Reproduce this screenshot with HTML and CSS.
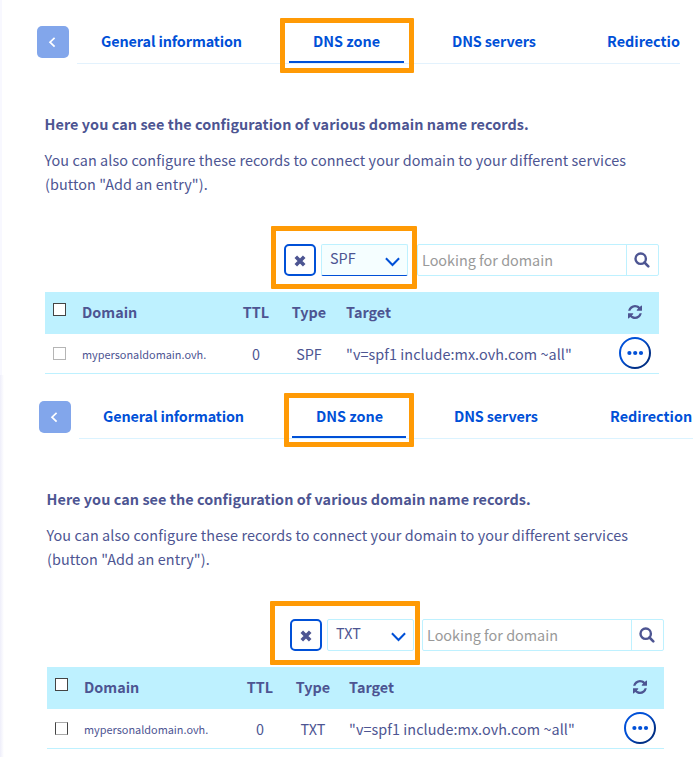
FILE: index.html
```html
<!DOCTYPE html>
<html lang="en">
<head>
<meta charset="utf-8">
<title>DNS zone</title>
<link rel="stylesheet" href="styles.css">
</head>
<body>
<svg width="0" height="0" class="sprite" aria-hidden="true">
  <symbol id="back" viewBox="0 0 32 32"><path d="M17.6 11.8 13 16.2l4.6 4.4" fill="none" stroke="#fff" stroke-width="1.7"/></symbol>
  <symbol id="cross" viewBox="0 0 12 12"><path d="M1.800 1.800 10.200 10.200M10.200 1.800 1.800 10.200" fill="none" stroke="#4d5592" stroke-width="3.600"/></symbol>
  <symbol id="chevron" viewBox="0 0 15 10"><path d="M.9 1.300 7.500 8l6.600-6.700" fill="none" stroke="#0050d7" stroke-width="2"/></symbol>
  <symbol id="search" viewBox="0 0 16 16"><circle cx="6.700" cy="6.700" r="5.200" fill="none" stroke="#4d5592" stroke-width="2.400"/><path d="m10.500 10.500 3.800 3.800" stroke="#4d5592" stroke-width="2.600" stroke-linecap="round"/></symbol>
  <symbol id="refresh" viewBox="0 0 1536 1536"><path fill="#4d5592" d="M1511 928q0 5-1 7-64 268-268 434.500T764 1536q-146 0-282.500-55T238 1324l-129 129q-19 19-45 19t-45-19-19-45V960q0-26 19-45t45-19h448q26 0 45 19t19 45-19 45l-137 137q71 66 161 102t187 36q134 0 250-65t186-179q11-17 53-117 8-23 30-23h192q13 0 22.500 9.500t9.500 22.500zm25-800v448q0 26-19 45t-45 19h-448q-26 0-45-19t-19-45 19-45l138-138Q969 256 768 256q-134 0-250 65T332 500q-11 17-53 117-8 23-30 23H50q-13 0-22.500-9.500T18 608v-7q65-268 270-434.500T768 0q146 0 284 55.500T1297 212l130-129q19-19 45-19t45 19 19 45z"/></symbol>
  <symbol id="menu" viewBox="0 0 32 32"><circle cx="16" cy="16" r="15" fill="#fff" stroke="url(#ring)" stroke-width="2"/><g fill="#0050d7"><circle cx="10.400" cy="16" r="2.100"/><circle cx="16.200" cy="16" r="2.100"/><circle cx="22" cy="16" r="2.100"/></g></symbol>
  <linearGradient id="ring" x1="0" y1="0" x2="1" y2="1"><stop offset=".4" stop-color="#0050d7"/><stop offset=".75" stop-color="#002f86"/></linearGradient>
</svg>

<section class="panel panel-spf">
  <nav class="topbar">
    <button class="back" aria-label="Back"><svg><use href="#back"/></svg></button>
    <div class="tabs">
      <a class="tab tab-general"><span>General information</span></a>
      <a class="tab tab-zone active"><span>DNS zone</span><i class="highlight"></i></a>
      <a class="tab tab-servers"><span>DNS servers</span></a>
      <a class="tab tab-redirect"><span>Redirectio</span></a>
    </div>
  </nav>
  <div class="content">
    <h2>Here you can see the configuration of various domain name records.</h2>
    <p>You can also configure these records to connect your domain to your different services<br><span class="hint">(button "Add an entry").</span></p>
    <div class="toolbar">
      <div class="filter">
        <button class="clear" aria-label="Clear filter"><svg><use href="#cross"/></svg></button>
        <div class="select focused"><span>SPF</span><svg><use href="#chevron"/></svg></div>
        <i class="highlight"></i>
      </div>
      <div class="search"><input type="text" placeholder="Looking for domain"><button aria-label="Search"><svg><use href="#search"/></svg></button></div>
    </div>
    <div class="records">
      <div class="row head">
        <i class="check"></i><b>Domain</b><b class="mid">TTL</b><b class="mid">Type</b><b class="target">Target</b><svg class="refresh"><use href="#refresh"/></svg>
      </div>
      <div class="row">
        <i class="check pale"></i><span class="domain">mypersonaldomain.ovh.</span><span class="mid">0</span><span class="mid">SPF</span><span class="target value">"v=spf1 include:mx.ovh.com ~all"</span><svg class="menu"><use href="#menu"/></svg>
      </div>
    </div>
  </div>
</section>

<section class="panel panel-txt">
  <nav class="topbar">
    <button class="back" aria-label="Back"><svg><use href="#back"/></svg></button>
    <div class="tabs">
      <a class="tab tab-general"><span>General information</span></a>
      <a class="tab tab-zone active"><span>DNS zone</span><i class="highlight"></i></a>
      <a class="tab tab-servers"><span>DNS servers</span></a>
      <a class="tab tab-redirect"><span>Redirection</span></a>
    </div>
  </nav>
  <div class="content">
    <h2>Here you can see the configuration of various domain name records.</h2>
    <p>You can also configure these records to connect your domain to your different services<br><span class="hint">(button "Add an entry").</span></p>
    <div class="toolbar">
      <div class="filter">
        <button class="clear" aria-label="Clear filter"><svg><use href="#cross"/></svg></button>
        <div class="select"><span>TXT</span><svg><use href="#chevron"/></svg></div>
        <i class="highlight"></i>
      </div>
      <div class="search"><input type="text" placeholder="Looking for domain"><button aria-label="Search"><svg><use href="#search"/></svg></button></div>
    </div>
    <div class="records">
      <div class="row head">
        <i class="check"></i><b>Domain</b><b class="mid">TTL</b><b class="mid">Type</b><b class="target">Target</b><svg class="refresh"><use href="#refresh"/></svg>
      </div>
      <div class="row">
        <i class="check half"></i><span class="domain">mypersonaldomain.ovh.</span><span class="mid">0</span><span class="mid">TXT</span><span class="target value">"v=spf1 include:mx.ovh.com ~all"</span><svg class="menu"><use href="#menu"/></svg>
      </div>
    </div>
  </div>
</section>
</body>
</html>
```

FILE: styles.css
```css
* { box-sizing: border-box; }
body {
  margin: 0;
  width: 698px;
  height: 757px;
  overflow: hidden;
  background: #fff;
  color: #4d5592;
  font: 14.4px/24px "Noto Sans CJK SC", "Noto Sans", sans-serif;
}
.sprite { position: absolute; }
svg { display: block; }
button { padding: 0; margin: 0; background: none; border: 0; }
.panel { height: 375px; padding-top: 26px; background: linear-gradient(90deg, #f8f8ff 2px, #fff 2px); }
.panel-spf { padding-left: 37px; }
.panel-txt { height: 382px; padding-left: 39px; background: linear-gradient(90deg, #eeeefa 0, #fff 4px); }

.topbar { display: flex; gap: 8px; height: 38px; }
.back { flex: none; width: 32px; height: 32px; border-radius: 5px; background: #82a6eb; }
.back svg { width: 32px; height: 32px; }
.tabs { display: flex; gap: 24px; width: 603px; height: 38px; border-bottom: 1px solid #e3f2fd; }
.panel-txt .tabs { width: 614px; border-color: #dbf3ff; }
.tab { flex: none; position: relative; height: 37px; padding: 3px 0 0 24px; color: #0050d7; font-weight: bold; white-space: nowrap; }
.tab-general { width: 188px; letter-spacing: -.12px; }
.tab-zone { width: 115px; }
.tab-servers { width: 131px; letter-spacing: -.12px; }
.panel-txt .tab-general { width: 189px; }
.panel-txt .tab-zone { width: 114px; }
.panel-txt .tab-servers { width: 132px; }
.active { border-bottom: 2px solid #0050d7; }
.highlight { position: absolute; border: 5px solid #ff9a05; border-radius: 1px; }
.tab .highlight { left: -9px; top: -8px; width: 134px; height: 55px; }
.panel-txt .tab .highlight { left: -8px; width: 130px; height: 54px; }

.content { width: 614px; margin: 48px 0 0 8px; }
.panel-txt .content { width: 617px; }
h2 { margin: 0 0 12px; font-size: inherit; line-height: 24px; letter-spacing: .07px; text-indent: -.5px; white-space: nowrap; }
p { margin: 0; letter-spacing: .083px; text-indent: -.5px; white-space: nowrap; }
.toolbar { display: flex; justify-content: flex-end; gap: 9px; margin-top: 48px; }
.panel-txt .toolbar { gap: 8px; }
.filter { position: relative; display: flex; gap: 5px; }
.filter .highlight { left: -13px; top: -18px; width: 146px; height: 63px; }
.panel-txt .filter .highlight { left: -20px; width: 150px; height: 64px; }
.clear { display: grid; place-items: center; width: 32px; height: 32px; border: 2px solid #0050d7; border-radius: 5px; }
.clear svg { width: 12px; height: 12px; margin-top: 2px; }
.select { display: flex; justify-content: space-between; width: 87px; height: 32px; padding: 1px 7px 0 8px; border: 1px solid #bef1ff; border-radius: 2px; }
.focused { background: #f5feff; border-bottom-color: #0050d7; }
.select svg { width: 15px; height: 10px; margin-top: 11px; }
.search { display: flex; width: 242px; height: 32px; border: 1px solid #bef1ff; border-radius: 2px; }
.search input { width: 208px; padding: 0 0 0 4px; border: 0; outline: 0; background: none; font: inherit; }
.search input::placeholder { color: #999; opacity: 1; }
.search button { display: grid; place-items: center; width: 32px; padding-right: 1px; border-left: 1px solid #bef1ff; }
.search button svg { width: 16px; height: 16px; }

.records { margin-top: 16px; }
.row { display: grid; grid-template-columns: 37px 153px 42px 64px 1fr auto; align-items: center; height: 40px; padding-right: 8px; border-bottom: 1px solid #bef1ff; white-space: nowrap; }
.panel-txt .row { grid-template-columns: 37px 155px 42px 64px 1fr auto; }
.head { height: 42px; padding-right: 17px; border: 0; background: #bef1ff; }
.head b { margin-top: -2px; }
.mid { text-align: center; }
.target { padding-left: 5px; }
.panel-txt .target { padding-left: 4px; }
.value { letter-spacing: .06px; }
.domain { font-size: 10.900px; }
.check { width: 13px; height: 13px; margin: 0 0 7px 8px; border: 1px solid #444; background: #fff; }
.row .pale { border-color: #b5b5b5; }
.row .half { border-color: #aaa #444; }
.row:not(.head) .check { margin-bottom: 0; }
.refresh { width: 14px; height: 14px; margin-bottom: 2px; }
.menu { width: 32px; height: 32px; margin-bottom: 1px; }
```
